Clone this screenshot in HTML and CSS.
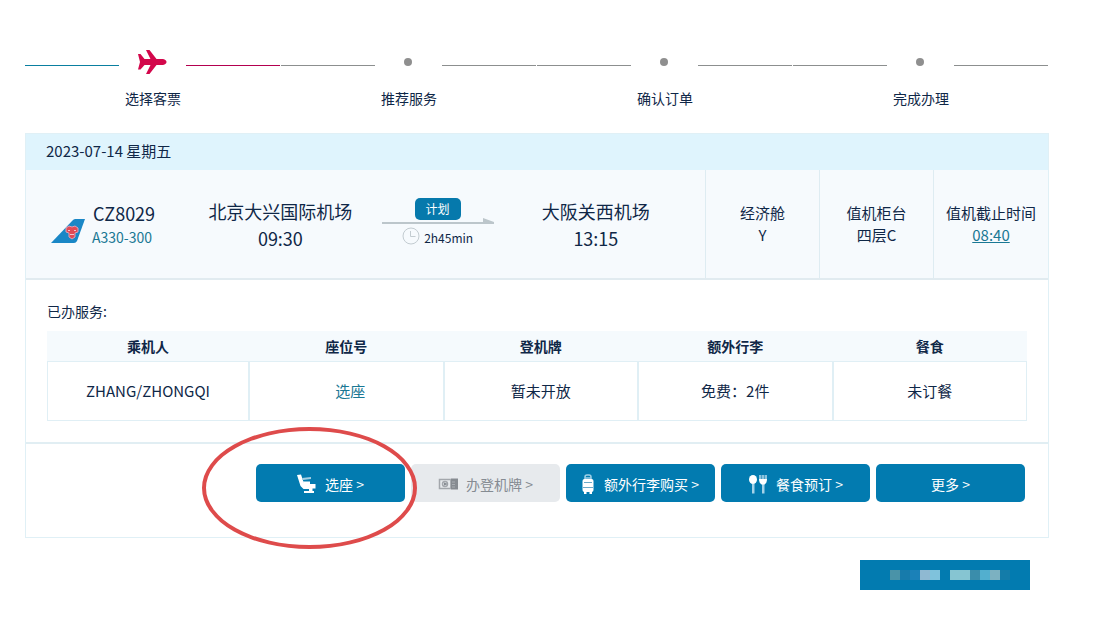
FILE: index.html
```html
<!DOCTYPE html>
<html lang="zh-CN">

<head>
    <meta charset="UTF-8">
    <meta name="viewport" content="width=device-width, initial-scale=1.0">
    <title>选择客票</title>
    <link rel="stylesheet" href="styles.css">
</head>

<body>
    <ol class="steps">
        <li class="step active">
            <div class="step-bar">
                <span class="line"></span>
                <svg class="plane" viewBox="0 0 30 26">
                    <path d="M1 5h2.500l4 5h6L9 1h3.500l7 9h6.500q3.500 1 3.500 3t-3.500 3h-6.500l-7 9H9l4.500-9h-6l-4 4.500H1L3 13z" />
                </svg>
                <span class="line"></span>
            </div>
            <p>选择客票</p>
        </li>
        <li class="step">
            <div class="step-bar">
                <span class="line"></span>
                <span class="dot"></span>
                <span class="line"></span>
            </div>
            <p>推荐服务</p>
        </li>
        <li class="step">
            <div class="step-bar">
                <span class="line"></span>
                <span class="dot"></span>
                <span class="line"></span>
            </div>
            <p>确认订单</p>
        </li>
        <li class="step">
            <div class="step-bar">
                <span class="line"></span>
                <span class="dot"></span>
                <span class="line"></span>
            </div>
            <p>完成办理</p>
        </li>
    </ol>

    <section class="ticket">
        <div class="date">2023-07-14 星期五</div>

        <div class="flight">
            <div class="route">
                <div class="airline">
                    <svg class="tail" viewBox="0 0 34 24">
                        <path fill="#1a87c6" d="M0 24L22 1q1-1 2.500-1H34l-8 22q-1 2-3 2z" />
                        <path fill="#e34a55" stroke="#dca0b8" stroke-width="1" d="M15 9l3-2 3 1 3-1 3 2v4l-3 1v4l-3 2-3-2v-4l-3-1z" />
                        <path fill="none" stroke="#f3c3cd" stroke-width="1" d="M17 11.500h2M23 11.500h2M19 15.500h4" />
                    </svg>
                    <div class="flight-no">
                        <strong>CZ8029</strong>
                        <a href="#">A330-300</a>
                    </div>
                </div>
                <div class="airport">
                    <div>北京大兴国际机场</div>
                    <div>09:30</div>
                </div>
                <div class="duration">
                    <span class="status">计划</span>
                    <svg class="arrow" viewBox="0 0 112 6">
                        <path fill="#bcc6cb" d="M0 4h101V0l11 4v2H0z" />
                    </svg>
                    <div class="time">
                        <svg class="clock" viewBox="0 0 18 18">
                            <circle cx="9" cy="9" r="8" />
                            <path d="M8.500 4v5.500h5" />
                        </svg>
                        <span>2h45min</span>
                    </div>
                </div>
                <div class="airport">
                    <div>大阪关西机场</div>
                    <div>13:15</div>
                </div>
            </div>
            <div class="info">
                <div>经济舱</div>
                <div>Y</div>
            </div>
            <div class="info">
                <div>值机柜台</div>
                <div>四层C</div>
            </div>
            <div class="info">
                <div>值机截止时间</div>
                <a href="#">08:40</a>
            </div>
        </div>

        <div class="service">
            <p>已办服务:</p>
            <table>
                <thead>
                    <tr>
                        <th class="passenger">乘机人</th>
                        <th>座位号</th>
                        <th>登机牌</th>
                        <th>额外行李</th>
                        <th>餐食</th>
                    </tr>
                </thead>
                <tbody>
                    <tr>
                        <td>ZHANG/ZHONGQI</td>
                        <td><a href="#">选座</a></td>
                        <td>暂未开放</td>
                        <td>免费：2件</td>
                        <td>未订餐</td>
                    </tr>
                </tbody>
            </table>
        </div>

        <div class="btn-box">
            <div class="marked">
                <button type="button">
                    <svg class="icon" viewBox="0 0 20 20">
                        <path fill="#fff" d="M0 1l4-.500L6.500 8l1.500 2h10.500v4.500h-3V17H17v2H7v-2h5v-2H6.500L3.500 12z" />
                        <path fill="#a5cfe3" d="M5 4l9-1v2L6 6z" />
                        <path fill="#fff" d="M6 7.500h7V10H7z" />
                    </svg>
                    选座 &gt;
                </button>
                <span class="circle"></span>
            </div>
            <button type="button" disabled>
                <svg class="icon" viewBox="0 0 20 20">
                    <path fill="none" stroke="#a3a7ac" stroke-width="1.500" d="M13 5.500H1.500v9H13" />
                    <path fill="#868b91" d="M13 4.500h7v11h-7z" />
                    <circle cx="7" cy="10" r="2.500" fill="none" stroke="#a3a7ac" stroke-width="1.500" />
                    <path fill="#868b91" d="M6 8.500l4 1.500-4 1.500z" />
                    <path fill="none" stroke="#a9adb2" stroke-width="1" d="M12.500 5v10M14 8h3M14 10.500h3M14 13h3" />
                </svg>
                办登机牌 &gt;
            </button>
            <button type="button" class="luggage">
                <svg class="icon" viewBox="0 0 20 20">
                    <path fill="none" stroke="#9fd0e6" stroke-width="1.500" d="M7 6V3q0-2 2-2h2q2 0 2 2v3M7 4h6" />
                    <rect x="4.500" y="5" width="11" height="13" rx="2" fill="#fff" />
                    <path fill="#fff" d="M6 17h2.500v3H6zM11.500 17H14v3h-2.500z" />
                    <path fill="none" stroke="#6ba9c8" stroke-width="1" d="M6 8.500h8M5 13.500h10" />
                </svg>
                额外行李购买 &gt;
            </button>
            <button type="button">
                <svg class="icon" viewBox="0 0 20 20">
                    <ellipse cx="5" cy="5.500" rx="4" ry="4.500" fill="#fff" />
                    <path fill="#a5d2e7" d="M4 10h2.500v9.500H4zM14 10h2.500v9.500H14z" />
                    <path fill="#8cc4de" d="M11 1h8v4h-8z" />
                    <path fill="#fff" d="M11 5h8q0 4-2.500 5.500h-3Q11 9 11 5z" />
                    <path fill="none" stroke="#4a9fc6" stroke-width="1" d="M13.500 1v4M16.500 1v4" />
                </svg>
                餐食预订 &gt;
            </button>
            <button type="button">更多 &gt;</button>
        </div>
    </section>

    <div class="submit-box">
        <button type="button" class="submit">
            <svg class="mosaic" viewBox="0 0 120 10" shape-rendering="crispEdges">
                <path fill="#4a93a8" d="M0 0h10v10H0z" />
                <path fill="#177bab" d="M10 0h10v10H10z" />
                <path fill="#1b81b8" d="M20 0h10v10H20z" />
                <path fill="#8fb9d2" d="M30 0h10v10H30z" />
                <path fill="#7fc2dc" d="M40 0h10v10H40z" />
                <path fill="#86c5d2" d="M60 0h20v10H60z" />
                <path fill="#3a8dab" d="M80 0h10v10H80z" />
                <path fill="#52afcf" d="M90 0h10v10H90z" />
                <path fill="#7cb1c1" d="M100 0h10v10h-10z" />
                <path fill="#147ca9" d="M110 0h10v10h-10z" />
            </svg>
        </button>
    </div>
</body>

</html>
```

FILE: styles.css
```css
body {
    margin: 0;
    padding: 48px 55px 32px 25px;
    background: #fff;
    color: #0f2747;
    font-family: "Noto Sans CJK SC", "Noto Sans", sans-serif;
    font-size: 15px;
    line-height: 22px;
}

p {
    margin: 0;
    font-size: 14px;
}

a {
    color: #1a7894;
    text-decoration: none;
}

/* 步骤条 */
.steps {
    display: flex;
    margin: 0 0 24px;
    padding: 0;
    list-style: none;
}

.step {
    flex: 1;
    text-align: center;
}

.step-bar {
    display: flex;
    align-items: center;
    justify-content: space-between;
    height: 28px;
    margin-bottom: 11px;
    padding-right: 1px;
}

.line {
    align-self: flex-start;
    width: 37%;
    height: 17px;
    border-bottom: 1px solid #8c8f8f;
}

.active .line {
    border-color: #0a7fa0;
}

.active .plane + .line {
    border-color: #b3004f;
}

.plane {
    width: 30px;
    height: 26px;
    margin-right: 2px;
    fill: #d3074b;
}

.dot {
    width: 8px;
    height: 8px;
    margin-right: 2px;
    border-radius: 50%;
    background: #8f8f8f;
}

/* 航班 */
.ticket {
    border: 1px solid #e0f0f6;
}

.date {
    padding: 6px 20px 8px;
    background: #dff4fd;
}

.flight {
    display: flex;
    height: 108px;
    background: #f6fafd;
    border-bottom: 2px solid #e1ebf0;
}

.route {
    flex: 1;
    display: grid;
    grid-template-columns: 176fr 156fr 158fr 158fr;
    align-items: center;
    padding-right: 30px;
}

.airline {
    display: flex;
    align-items: flex-end;
    gap: 4px;
    padding: 2px 0 0 25px;
}

.tail {
    width: 34px;
    height: 24px;
    margin-bottom: 6px;
}

.flight-no {
    display: grid;
    text-align: center;
    line-height: 24px;
}

.flight-no strong {
    padding-left: 4px;
    font-size: 18px;
    font-weight: normal;
}

.flight-no a {
    font-size: 14px;
}

.airport {
    padding-top: 2px;
    text-align: center;
    font-size: 18px;
    line-height: 27px;
}

.duration {
    display: flex;
    flex-direction: column;
    align-items: center;
    padding-bottom: 2px;
    font-size: 12px;
}

.status {
    width: 46px;
    border-radius: 5px;
    background: #0679ac;
    color: #fff;
    text-align: center;
}

.arrow {
    width: 112px;
    height: 6px;
    margin-top: -2px;
}

.time {
    display: flex;
    gap: 4px;
    margin-top: 3px;
}

.clock {
    width: 18px;
    height: 18px;
    fill: none;
    stroke: #c3ccd1;
}

.info {
    box-sizing: border-box;
    width: 114px;
    padding-top: 32px;
    border-left: 1px solid #deecf2;
    text-align: center;
}

.info:last-child {
    width: 115px;
}

.info a {
    text-decoration: underline;
}

/* 已办服务 */
.service {
    padding: 20px 21px 21px;
    border-bottom: 2px solid #e1eef3;
}

table {
    width: 100%;
    margin-top: 9px;
    border-spacing: 0;
    table-layout: fixed;
}

th {
    height: 30px;
    padding: 0;
    background: #f5fafd;
    font-size: 14px;
}

.passenger {
    width: 202px;
}

td {
    height: 58px;
    padding: 0;
    border: 1px solid #e0eff5;
    text-align: center;
}

td a {
    padding-left: 8px;
}

/* 按钮 */
.btn-box {
    display: flex;
    justify-content: flex-end;
    gap: 6px;
    padding: 20px 23px 35px;
}

button {
    display: flex;
    align-items: center;
    justify-content: center;
    gap: 8px;
    width: 149px;
    height: 38px;
    padding: 2px 0 0;
    border: none;
    border-radius: 5px;
    background: #027bb0;
    color: #fff;
    font-family: inherit;
    font-size: 14px;
    cursor: pointer;
}

button:disabled {
    background: #e7eaed;
    color: #858b92;
    cursor: default;
}

.icon {
    width: 20px;
    height: 20px;
}

.luggage {
    gap: 6px;
    padding-right: 4px;
}

.marked {
    position: relative;
}

.circle {
    position: absolute;
    top: -37px;
    left: -54px;
    box-sizing: border-box;
    width: 215px;
    height: 122px;
    border: 4px solid #de4b4b;
    border-radius: 50%;
    pointer-events: none;
}

.submit-box {
    display: flex;
    justify-content: flex-end;
    padding: 22px 19px 0;
}

.submit {
    width: 170px;
    height: 30px;
    padding: 0 0 0 10px;
    border-radius: 0;
}

.mosaic {
    width: 120px;
    height: 10px;
}
```
